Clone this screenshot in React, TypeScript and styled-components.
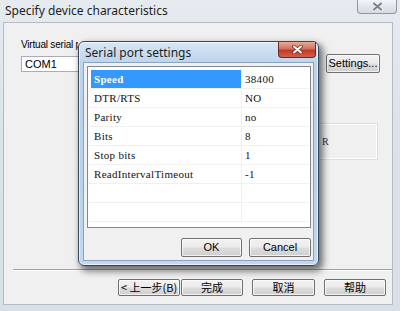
import React from 'react';
import styled, { createGlobalStyle } from 'styled-components';

const GlobalStyle = createGlobalStyle`
  html, body {
    margin: 0;
    padding: 0;
    background: #dde3ea;
  }
  body {
    font-family: "Liberation Sans", "Noto Sans", sans-serif;
    font-size: 11px;
    color: #000;
  }
`;

const Window = styled.div`
  position: relative;
  width: 400px;
  height: 311px;
  overflow: hidden;
  display: flex;
  flex-direction: column;
  background: linear-gradient(#e6ebf0, #dbe2e9 40%, #d8dfe7);
`;

const TitleBar = styled.div`
  height: 22px;
  display: flex;
  align-items: center;
  padding-left: 5px;
  font-family: "Noto Sans", "Liberation Sans", sans-serif;
  font-size: 12px;
  color: #1e1e1e;
`;

const TitleText = styled.span`
  margin-top: -1px;
`;

const OuterClose = styled.div`
  margin-left: auto;
  margin-right: 3px;
  align-self: flex-start;
  width: 40px;
  height: 14px;
  box-sizing: border-box;
  border: 1px solid #8d96a1;
  border-top: none;
  border-radius: 0 0 4px 4px;
  background: linear-gradient(#f3f5f7, #e2e6eb 50%, #d7dce2);
  display: flex;
  align-items: center;
  justify-content: center;
`;

const Client = styled.div`
  flex: 1;
  margin: 0 7px 6px 3px;
  border: 1px solid #b3bbc4;
  background: #f0f0f0;
  display: flex;
  flex-direction: column;
`;

const Content = styled.div`
  display: flex;
  flex-direction: column;
  padding: 15px 12px 0 17px;
`;

/* the dialog covers the rest of this label, so it is clipped where the dialog starts */
const Label = styled.div`
  width: 57px;
  height: 13px;
  line-height: 13px;
  font-size: 10px;
  letter-spacing: -0.2px;
  overflow: hidden;
  white-space: nowrap;
`;

const FieldRow = styled.div`
  display: flex;
  align-items: center;
  margin-top: 3px;
  height: 19px;
`;

const TextBox = styled.div`
  width: 230px;
  height: 16px;
  box-sizing: border-box;
  border: 1px solid #abadb3;
  background: #fff;
  padding-left: 3px;
  line-height: 14px;
`;

const Button = styled.button<{ $w: number; $h?: number; $cjk?: boolean }>`
  width: ${(p) => p.$w}px;
  height: ${(p) => p.$h ?? 19}px;
  box-sizing: border-box;
  padding: 0;
  border: 1px solid #707070;
  border-radius: 2px;
  background: linear-gradient(#f2f2f2, #ebebeb 48%, #dddddd 52%, #cfcfcf);
  box-shadow: inset 0 0 0 1px rgba(255, 255, 255, 0.7);
  font-family: ${(p) =>
    p.$cjk
      ? '"Noto Sans CJK SC", "Liberation Sans", sans-serif'
      : '"Liberation Sans", "Noto Sans", sans-serif'};
  font-size: 11px;
  color: #000;
  line-height: 1;
  white-space: nowrap;
`;

const SettingsButton = styled(Button)`
  margin-left: auto;
`;

const GroupBox = styled.div`
  align-self: flex-end;
  margin: 50px 2px 0 0;
  width: 128px;
  height: 37px;
  box-sizing: border-box;
  border: 1px solid #d5dfe5;
  box-shadow: inset 0 0 0 1px #fff;
  display: flex;
  align-items: center;
  padding-left: 71px;
  font-family: "Liberation Serif", serif;
  font-size: 10px;
  color: #333;
`;

const Spacer = styled.div`
  flex: 1;
`;

const Separator = styled.div`
  margin: 0 0 0 9px;
  border-top: 1px solid #a0a0a0;
  border-bottom: 1px solid #fff;
`;

const ButtonRow = styled.div`
  display: flex;
  justify-content: flex-end;
  padding: 8px 6px 8px 0;
`;

const WizardButton = styled(Button)<{ $gap: number }>`
  margin-left: ${(p) => p.$gap}px;
`;

/* ---- modal dialog ---- */

const Dialog = styled.div`
  position: absolute;
  left: 78px;
  top: 41px;
  width: 241px;
  height: 225px;
  box-sizing: border-box;
  border: 1px solid #34495e;
  border-radius: 6px;
  background: linear-gradient(#d7e6f5, #bcd3ea 10%, #b9d1ea 60%, #c2d8ee);
  box-shadow: inset 0 0 0 1px rgba(255, 255, 255, 0.6), 3px 4px 7px 1px rgba(0, 0, 0, 0.55);
  display: flex;
  flex-direction: column;
  padding: 0 4px 4px 4px;
`;

const DialogTitleBar = styled.div`
  height: 20px;
  display: flex;
  align-items: center;
  padding-left: 2px;
  font-family: "Noto Sans", "Liberation Sans", sans-serif;
  font-size: 12px;
  color: #1e1e1e;
`;

const DialogClose = styled.div`
  margin-left: auto;
  margin-right: -2px;
  align-self: flex-start;
  width: 38px;
  height: 16px;
  box-sizing: border-box;
  border: 1px solid #6b2a22;
  border-top: none;
  border-radius: 0 0 4px 4px;
  background: linear-gradient(#e8a998, #d1735f 45%, #c0392b 55%, #d4604c);
  display: flex;
  align-items: center;
  justify-content: center;
`;

const DialogClient = styled.div`
  flex: 1;
  border: 1px solid #8aa3bd;
  background: #f0f0f0;
  display: flex;
  flex-direction: column;
  padding: 3px 2px 3px 3px;
`;

const List = styled.div`
  height: 162px;
  box-sizing: border-box;
  border: 1px solid #828790;
  background: #fff;
  padding: 3px 1px 0 1px;
  overflow: hidden;
`;

const Row = styled.div`
  display: grid;
  grid-template-columns: 153px 1fr;
  height: 19px;
  box-sizing: border-box;
  border-bottom: 1px solid #f0f0f0;
`;

const Cell = styled.div<{ $selected?: boolean; $first?: boolean }>`
  display: flex;
  align-items: center;
  padding-left: 3px;
  margin-left: ${(p) => (p.$first ? 2 : 0)}px;
  border-right: ${(p) => (p.$first ? '1px solid #f0f0f0' : 'none')};
  background: ${(p) => (p.$selected ? '#3399ff' : 'transparent')};
  color: ${(p) => (p.$selected ? '#fff' : '#111')};
  font-family: "Liberation Serif", "Noto Sans CJK SC", serif;
  font-weight: ${(p) => (p.$selected ? 700 : 400)};
  font-size: 11px;
  letter-spacing: 0.3px;
  white-space: nowrap;
`;

const DialogButtons = styled.div`
  display: flex;
  justify-content: flex-end;
  gap: 7px;
  margin-top: 10px;
`;

const XIcon: React.FC<{ color: string; outline: string }> = ({ color, outline }) => (
  <svg width={11} height={9} viewBox="0 0 11 9">
    <path d="M2 1.5 L9 7.5 M9 1.5 L2 7.5" stroke={outline} strokeWidth="3.6" strokeLinecap="round" />
    <path d="M2 1.5 L9 7.5 M9 1.5 L2 7.5" stroke={color} strokeWidth="2" strokeLinecap="round" />
  </svg>
);

const rows: [string, string][] = [
  ['Speed', '38400'],
  ['DTR/RTS', 'NO'],
  ['Parity', 'no'],
  ['Bits', '8'],
  ['Stop bits', '1'],
  ['ReadIntervalTimeout', '-1'],
  ['', ''],
  ['', ''],
];

export default function App() {
  return (
    <>
      <GlobalStyle />
      <Window>
        <TitleBar>
          <TitleText>Specify device characteristics</TitleText>
          <OuterClose>
            <XIcon color="#7a8088" outline="#eef1f4" />
          </OuterClose>
        </TitleBar>
        <Client>
          <Content>
            <Label>Virtual serial port name</Label>
            <FieldRow>
              <TextBox>COM1</TextBox>
              <SettingsButton $w={54}>Settings...</SettingsButton>
            </FieldRow>
            <GroupBox>R</GroupBox>
          </Content>
          <Spacer />
          <Separator />
          <ButtonRow>
            <WizardButton $w={62} $h={17} $cjk $gap={0}>
              &lt; 上一步(B)
            </WizardButton>
            <WizardButton $w={62} $h={17} $cjk $gap={1}>
              完成
            </WizardButton>
            <WizardButton $w={63} $h={17} $cjk $gap={9}>
              取消
            </WizardButton>
            <WizardButton $w={62} $h={17} $cjk $gap={9}>
              帮助
            </WizardButton>
          </ButtonRow>
        </Client>

        <Dialog>
          <DialogTitleBar>
            <span>Serial port settings</span>
            <DialogClose>
              <XIcon color="#ffffff" outline="#7a2c20" />
            </DialogClose>
          </DialogTitleBar>
          <DialogClient>
            <List>
              {rows.map(([name, value], i) => (
                <Row key={i}>
                  <Cell $first $selected={i === 0}>
                    {name}
                  </Cell>
                  <Cell>{value}</Cell>
                </Row>
              ))}
            </List>
            <DialogButtons>
              <Button $w={61}>OK</Button>
              <Button $w={62}>Cancel</Button>
            </DialogButtons>
          </DialogClient>
        </Dialog>
      </Window>
    </>
  );
}
